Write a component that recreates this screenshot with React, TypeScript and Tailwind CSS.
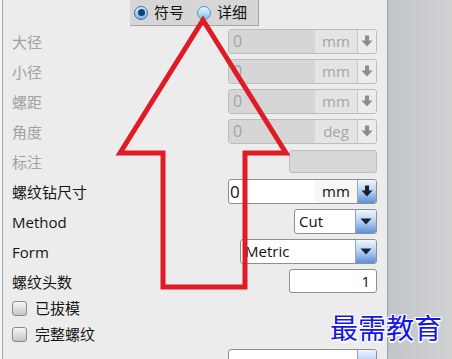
import React from "react";

const font = { fontFamily: '"Open Sans","Noto Sans CJK SC",sans-serif' };

function ThickDown({ color }: { color: string }) {
  return (
    <svg width="12" height="12" viewBox="0 0 12 12">
      <rect x="4" y="0.5" width="4" height="5.5" fill={color} />
      <polygon points="0.5,5.5 11.5,5.5 6,11.5" fill={color} />
    </svg>
  );
}

function Tri() {
  return (
    <svg width="12" height="7" viewBox="0 0 12 7">
      <polygon points="0.5,0.5 11.5,0.5 6,6.5" fill="#16233d" />
    </svg>
  );
}

function DisabledInput({ unit }: { unit: string }) {
  return (
    <div className="flex w-[149px] h-[25px] rounded-[3px] border border-[#bdbdbd] overflow-hidden">
      <div className="w-[86px] bg-[#d6d6d6] text-[#a3a3a3] text-[16px] leading-[23px] pl-[4px]">0</div>
      <div className="w-[42px] bg-[#e4e4e4] text-[#a6a6a6] text-[15px] leading-[23px] text-center">{unit}</div>
      <div className="flex-1 flex items-center justify-center bg-[#ececec] border-l border-[#c8c8c8]">
        <ThickDown color="#8d8d8d" />
      </div>
    </div>
  );
}

function Combo({ w, text }: { w: string; text: string }) {
  return (
    <div className={`flex ${w} h-[25px] rounded-[3px] border border-[#8f8f8f] bg-white overflow-hidden`}>
      <div className="flex-1 text-[15px] leading-[23px] pl-[4px] text-[#111]">{text}</div>
      <div className="w-[21px] flex items-center justify-center border-l border-[#8da7c9] bg-linear-to-b from-[#f1f6fd] via-[#b4cff0] to-[#5b90d8]">
        <Tri />
      </div>
    </div>
  );
}

function Row({
  label,
  disabled,
  children,
}: {
  label: string;
  disabled?: boolean;
  children?: React.ReactNode;
}) {
  return (
    <div className="flex items-center justify-between h-[30px]">
      <span className={`text-[15px] pt-[2px] ${disabled ? "text-[#a2a2a2]" : "text-[#161616]"}`}>{label}</span>
      {children}
    </div>
  );
}

function Check({ label }: { label: string }) {
  return (
    <div className="flex items-center gap-[8px]">
      <div className="w-[15px] h-[15px] rounded-[3px] border border-[#8a8a8a] bg-linear-to-b from-[#f6f6f6] to-[#c6c6c6]" />
      <span className="text-[15px] text-[#161616]">{label}</span>
    </div>
  );
}

export default function App() {
  return (
    <div className="relative w-[452px] h-[359px] overflow-hidden flex bg-[#c9cbcd]" style={font}>
      <div className="w-[2px] bg-[#f4f4f4]" />
      <div className="w-[386px] bg-[#ececec] border-l border-r border-[#a2a4a6] flex flex-col">
        {/* radio group */}
        <div className="h-[27px] pl-[127px]">
          <div className="w-[129px] h-[26px] bg-[#d6d6d6] border-r border-b border-[#a6a6a6] flex items-center pl-[4px] gap-[6px]">
            <div className="w-[14px] h-[14px] rounded-full border border-[#3d6ea3] bg-linear-to-b from-[#dcecfa] to-[#7fb3e2] flex items-center justify-center">
              <div className="w-[7px] h-[7px] rounded-full bg-[#0d3f80]" />
            </div>
            <span className="text-[15px] text-[#111] mr-[7px]">符号</span>
            <div className="w-[14px] h-[14px] rounded-full border border-[#5d8fbf] bg-linear-to-b from-[#e6f5fd] to-[#7ec2e8]" />
            <span className="text-[15px] text-[#111]">详细</span>
          </div>
        </div>

        <div className="flex flex-col pl-[9px] pr-[10px]">
          <Row label="大径" disabled>
            <DisabledInput unit="mm" />
          </Row>
          <Row label="小径" disabled>
            <DisabledInput unit="mm" />
          </Row>
          <Row label="螺距" disabled>
            <DisabledInput unit="mm" />
          </Row>
          <Row label="角度" disabled>
            <DisabledInput unit="deg" />
          </Row>
          <Row label="标注" disabled>
            <div className="w-[88px] h-[23px] rounded-[3px] border border-[#bdbdbd] bg-[#d8d8d8]" />
          </Row>
          <Row label="螺纹钻尺寸">
            <div className="flex w-[149px] h-[25px] rounded-[3px] border border-[#8f8f8f] overflow-hidden bg-white">
              <div className="w-[86px] text-[17px] leading-[23px] pl-[1px] text-[#111]">0</div>
              <div className="w-[42px] bg-[#f7f7f7] text-[15px] leading-[23px] text-center text-[#111]">mm</div>
              <div className="flex-1 flex items-center justify-center border-l border-[#8da7c9] bg-linear-to-b from-[#f1f6fd] via-[#b4cff0] to-[#5b90d8]">
                <ThickDown color="#1b1f2b" />
              </div>
            </div>
          </Row>
          <Row label="Method">
            <Combo w="w-[83px]" text="Cut" />
          </Row>
          <Row label="Form">
            <Combo w="w-[137px]" text="Metric" />
          </Row>
          <Row label="螺纹头数">
            <div className="w-[88px] h-[24px] rounded-[3px] border border-[#8f8f8f] bg-white text-[15px] leading-[22px] text-right pr-[6px] text-[#111]">
              1
            </div>
          </Row>
          <div className="h-[24px] flex items-center">
            <Check label="已拔模" />
          </div>
        </div>

        <div className="ml-[7px] h-px bg-[#a9a9a9]" />

        <div className="flex flex-col pl-[9px] pr-[10px]">
          <div className="h-[28px] flex items-center">
            <Check label="完整螺纹" />
          </div>
          <div className="flex justify-end pt-[1px]">
            <div className="flex w-[149px] h-[25px] rounded-[3px] border border-[#8f8f8f] overflow-hidden bg-white">
              <div className="w-[128px]" />
              <div className="flex-1 border-l border-[#8da7c9] bg-linear-to-b from-[#f1f6fd] via-[#b4cff0] to-[#5b90d8]" />
            </div>
          </div>
        </div>
      </div>
      <div className="flex-1 bg-linear-to-r from-[#c3c6c9] to-[#cfd1d3]" />

      {/* red arrow annotation */}
      <svg className="absolute left-0 top-0 pointer-events-none" width="452" height="359">
        <polygon
          points="203,20 286,153 245,153 245,287 163,287 163,153 120,153"
          fill="none"
          stroke="#e11b25"
          strokeWidth="5"
          strokeLinejoin="miter"
        />
      </svg>

      {/* watermark */}
      <div
        className="absolute left-[330px] top-[307px] text-[28px] leading-[40px] text-[#1515e8] [text-shadow:-1px_-1px_0_#fff,1px_-1px_0_#fff,-1px_1px_0_#fff,1px_1px_0_#fff,0_2px_0_#fff]"
        style={{ fontFamily: '"Noto Sans CJK SC",sans-serif' }}
      >
        最需教育
      </div>
    </div>
  );
}
